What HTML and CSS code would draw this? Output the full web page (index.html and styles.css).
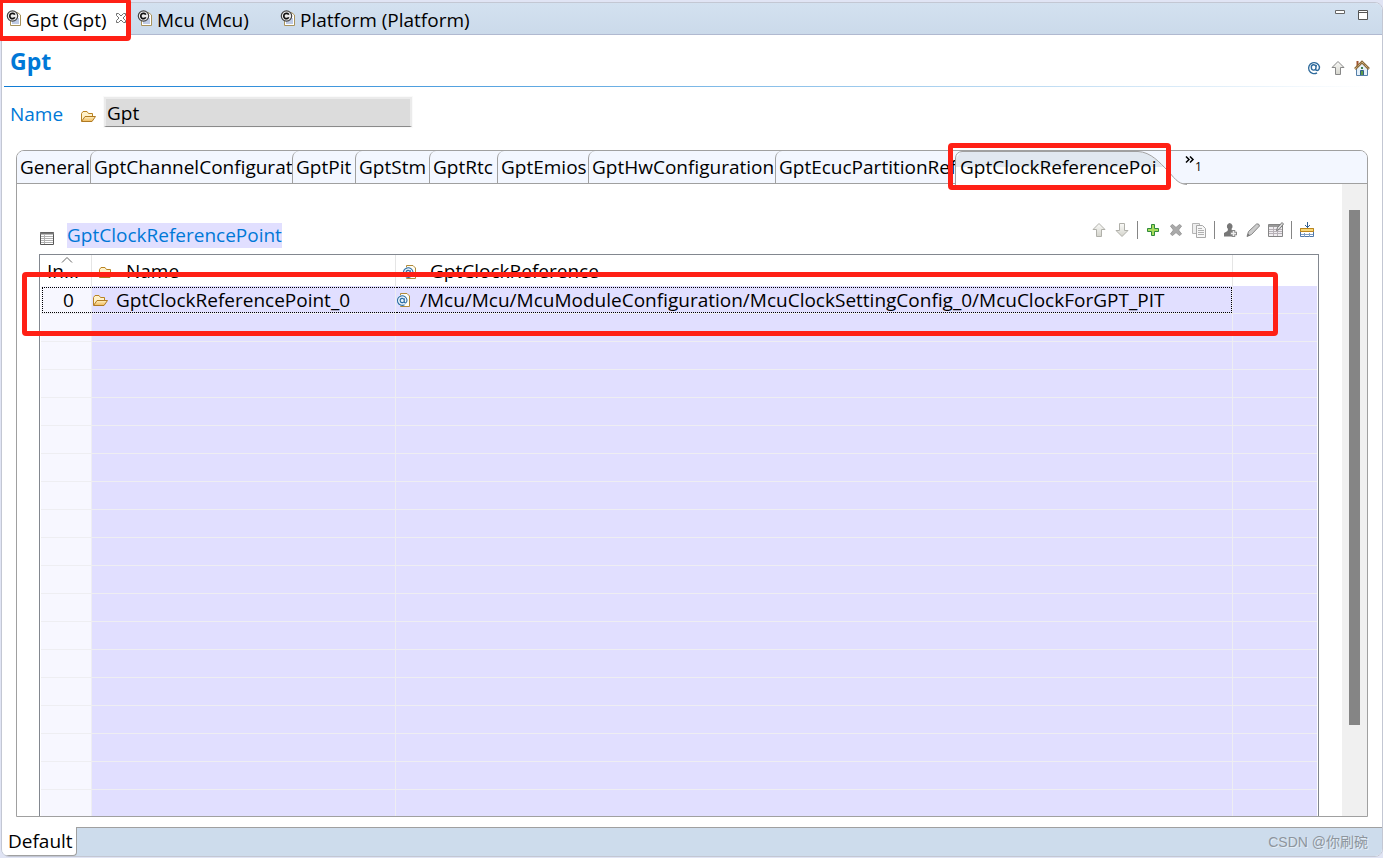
FILE: index.html
```html
<!DOCTYPE html>
<html lang="en">
<head>
<meta charset="utf-8">
<title>Gpt</title>
<link rel="stylesheet" href="styles.css">
</head>
<body>
<svg class="defs" width="0" height="0" aria-hidden="true">
  <defs>
    <linearGradient id="gold" x1="0" y1="0" x2="0" y2="1"><stop offset="0" stop-color="#fff0c0"/><stop offset="1" stop-color="#efb95c"/></linearGradient>
    <linearGradient id="grey" x1="0" y1="0" x2="0" y2="1"><stop offset="0" stop-color="#fafaf8"/><stop offset="1" stop-color="#d4d4cc"/></linearGradient>
    <symbol id="folder" viewBox="0 0 16 16">
      <path d="M1.500 13V5.500L3 3.500h4L8.500 5.500h4V8" fill="#fff1c9" stroke="#b98322"/>
      <path d="M1.500 13.500L5 8.500h10.500L12 13.500Z" fill="url(#gold)" stroke="#b07a22"/>
    </symbol>
    <symbol id="config" viewBox="0 0 16 16">
      <path d="M4.500 2.500H11.500L14.500 5v10.500h-10Z" fill="#fff" stroke="#a8935c"/>
      <path d="M6 11h7M6 13h7M11 9h2" stroke="#7f97cc"/>
      <circle cx="6.500" cy="6" r="5.200" fill="#ededed" stroke="#444" stroke-width="1.200"/>
      <path d="M8.800 4.600A2.700 2.700 0 1 0 8.800 7.400" fill="none" stroke="#111" stroke-width="1.700"/>
    </symbol>
    <symbol id="atdoc" viewBox="0 0 16 16">
      <path d="M4.500 1.500H11L13.500 4v10.500h-9Z" fill="#fffdf2" stroke="#b08a3a"/>
      <circle cx="6" cy="8.500" r="5.500" fill="#e9f3fb"/>
      <path d="M8.300 6.200v3.600q0 1.200 1.200 1.200q1.500-.5 1.500-3A4.800 4.800 0 1 0 8.500 12.800M8.200 8.300a2 2.200 0 1 0-4 .6a2 2 0 0 0 4-.6" fill="none" stroke="#2b6ca3" stroke-width="1.100"/>
    </symbol>
    <symbol id="at" viewBox="0 0 16 16">
      <path d="M10.300 4.800L9.800 9q0 1.600 1.400 1.600q2.300-.6 2.300-3.600A5.500 5.500 0 1 0 11 12.800M10 6.800a2.300 2.600 0 1 0-4.600 1.200a2 2 0 0 0 4.500-.3" fill="none" stroke="#2f6b9c" stroke-width="1.400"/>
    </symbol>
    <symbol id="up" viewBox="0 0 16 16"><path d="M8 1.500L14 7.500H10.500V14.500H5.500V7.500H2Z" fill="url(#grey)" stroke="currentColor"/></symbol>
    <symbol id="down" viewBox="0 0 16 16"><path d="M8 14.500L14 8.500H10.500V1.500H5.500V8.500H2Z" fill="url(#grey)" stroke="currentColor"/></symbol>
    <symbol id="grid" viewBox="0 0 16 16">
      <path d="M1.500 2.500h13v12h-13Z" fill="#fff" stroke="#555"/>
      <path d="M1 3.500h14" stroke="#777" stroke-width="2"/>
      <path d="M2 6.500h12M2 8.500h12M2 10.500h12M2 12.500h12M5.500 5v9" stroke="#b0b0b0"/>
    </symbol>
  </defs>
</svg>

<div class="editor">
  <nav class="editor-tabs">
    <button class="editor-tab active"><svg class="icon"><use href="#config"/></svg>Gpt (Gpt)
      <svg class="close" viewBox="0 0 12 12"><path d="M1.500 1.500h2L6 4l2.500-2.500h2v2L8 6l2.500 2.500v2h-2L6 8l-2.500 2.500h-2v-2L4 6L1.500 3.500Z" fill="#fff" stroke="#707070"/></svg></button>
    <button class="editor-tab mcu"><svg class="icon"><use href="#config"/></svg>Mcu (Mcu)</button>
    <button class="editor-tab"><svg class="icon"><use href="#config"/></svg>Platform (Platform)</button>
    <div class="window-actions">
      <button aria-label="Minimize"><svg class="win" viewBox="0 0 12 12"><path d="M1.500 1.500h9v3h-9Z" fill="#fff" stroke="#666"/></svg></button>
      <button aria-label="Maximize"><svg class="win" viewBox="0 0 12 12"><path d="M1.500 1.500h9v9h-9ZM1 3.500h10" fill="#fff" stroke="#555"/></svg></button>
    </div>
  </nav>

  <header class="form-head">
    <h1>Gpt</h1>
    <div class="head-actions">
      <button aria-label="Reference"><svg class="icon"><use href="#at"/></svg></button>
      <button aria-label="Up" class="tone-mid"><svg class="icon"><use href="#up"/></svg></button>
      <button aria-label="Home"><svg class="icon" viewBox="0 0 16 16">
        <path d="M3.500 1v5" stroke="#a0522d" stroke-width="2"/>
        <path d="M2.500 8v7.500h11V8L8 3Z" fill="#e4f0fa" stroke="#557fa8"/>
        <path d="M1 9L8 2l7 7" fill="none" stroke="#8a6a3c" stroke-width="2.600"/>
        <path d="M1 9L8 2l7 7" fill="none" stroke="#f0d09a" stroke-dasharray="1 1"/>
        <path d="M6.500 15v-4.500h3V15" fill="#5c9a4a" stroke="#2f5f88"/><path d="M7 7h2v2H7Z" fill="#3f8050"/>
      </svg></button>
    </div>
  </header>

  <div class="name-row">
    <label for="name">Name</label>
    <svg class="icon"><use href="#folder"/></svg>
    <input id="name" type="text" value="Gpt" readonly>
  </div>

  <main class="folder">
    <nav class="page-tabs">
      <button>General</button>
      <button>GptChannelConfigurat</button>
      <button>GptPit</button>
      <button>GptStm</button>
      <button>GptRtc</button>
      <button>GptEmios</button>
      <button>GptHwConfiguration</button>
      <button>GptEcucPartitionRef</button>
      <button class="selected">
        <svg class="tab-shape" viewBox="0 0 232 34">
          <path d="M0 34V7L6 1H183C196 1 205 12 212 19S222 33 232 33V34Z" fill="#fff"/>
          <path d="M1 16V7L6 1H183C194 1 202 9 208 16Z" fill="#e1e8f0"/>
          <path d="M.5 34V7Q1 1 7 .5H183C196 1 205 12 212 19S222 33 232 33.500" fill="none" stroke="#a0a0a0"/>
        </svg><span>GptClockReferencePoi</span></button>
      <button class="more" aria-label="1 more tab"><svg viewBox="0 0 10 8"><path d="M1 .5L4 3.500L1 6.500M5 .5L8 3.500L5 6.500" fill="none" stroke="#000" stroke-width="1.500"/></svg>1</button>
    </nav>

    <div class="page">
      <section class="list">
        <div class="list-head">
          <svg class="icon"><use href="#grid"/></svg>
          <h2>GptClockReferencePoint</h2>
          <div class="toolbar">
            <button aria-label="Move up" class="tone-light"><svg class="icon"><use href="#up"/></svg></button>
            <button aria-label="Move down" class="tone-light"><svg class="icon"><use href="#down"/></svg></button>
            <i></i>
            <button aria-label="Add"><svg class="icon" viewBox="0 0 16 16"><path d="M6.500 2.500h3v4h4v3h-4v4h-3v-4h-4v-3h4Z" fill="#a8dc5c" stroke="#2f8a3c"/></svg></button>
            <button aria-label="Delete"><svg class="icon" viewBox="0 0 16 16"><path d="M2.500 4L4.500 2.500L8 5.500l3.500-3L13.500 4L10.500 8l3 4l-2 1.500L8 10.500l-3.500 3L2.500 12l3-4Z" fill="#aaa" stroke="#999"/></svg></button>
            <button aria-label="Duplicate"><svg class="icon" viewBox="0 0 16 16"><path d="M1.500 1.500h7v10h-7Z" fill="#eee" stroke="#b5b5b5"/><path d="M5.500 3.500h6l3 3v9h-9Z" fill="#f7f7f7" stroke="#a8a8a8"/><path d="M7 6.500h4M7 8.500h6M7 10.500h6M7 12.500h6" stroke="#b0b0b0"/></svg></button>
            <i></i>
            <button aria-label="Add user"><svg class="icon" viewBox="0 0 16 16"><path d="M7.500 1a3.500 3.500 0 0 1 2 6l1 3H12v4.500H2V11l3.500-2L6 7a3.500 3.500 0 0 1 1.500-6Z" fill="#777"/><path d="M11.500 8v7M8 11.500h7" stroke="#888" stroke-width="3.500"/><path d="M11.500 9v5M9 11.500h5" stroke="#eee" stroke-width="1.500"/></svg></button>
            <button aria-label="Edit"><svg class="icon" viewBox="0 0 16 16"><path d="M2 14.500L3.500 9.500L11.500 2Q14 1 14.500 4L6.500 12.500Z" fill="#ccc" stroke="#858585"/><path d="M2 14.500l1-3l2 2Z" fill="#777"/></svg></button>
            <button aria-label="Edit table"><svg class="icon" viewBox="0 0 16 16"><path d="M.5 2.500h14v12H.5Z" fill="#efedf0" stroke="#858585"/><path d="M1 4h13" stroke="#999" stroke-width="2"/><path d="M1 7.500h13M1 9.500h13M1 11.500h13M5.500 5v9M9.500 5v9" stroke="#b7b1b7"/><path d="M8.500 8.500l1-3L14 .500l1.500 1.500L11 7.500Z" fill="#ddd" stroke="#777"/></svg></button>
            <i></i>
            <button aria-label="Insert column"><svg class="icon" viewBox="0 0 16 16"><path d="M1.500 6.500h13v8h-13Z" fill="#fff" stroke="#4e76a8"/><path d="M2 12.500h12M5.500 11v4M10.500 11v4" stroke="#7f9fc6"/><path d="M1.500 6.500h13v3h-13Z" fill="#f7d77a" stroke="#bd861b"/><path d="M8.500 0v6M6 3l2.500 2.500L11 3" stroke="#315f91" fill="none"/></svg></button>
          </div>
        </div>
        <div class="table-wrap">
          <table>
            <colgroup><col class="c-index"><col class="c-name"><col class="c-ref"><col></colgroup>
            <thead><tr>
              <th scope="col"><svg class="sort" viewBox="0 0 12 6"><path d="M1 5.500L6 .5L11 5.500" fill="none" stroke="#666"/></svg><div class="head-cell">In...</div></th>
              <th scope="col"><div class="head-cell"><svg class="icon"><use href="#folder"/></svg>Name</div></th>
              <th scope="col"><div class="head-cell"><svg class="icon"><use href="#atdoc"/></svg>GptClockReference</div></th>
              <th></th>
            </tr></thead>
            <tbody>
              <tr class="current">
                <td><div class="cell first">0</div></td>
                <td><div class="cell"><svg class="icon"><use href="#folder"/></svg>GptClockReferencePoint_0</div></td>
                <td><div class="cell last"><svg class="icon"><use href="#atdoc"/></svg>/Mcu/Mcu/McuModuleConfiguration/McuClockSettingConfig_0/McuClockForGPT_PIT</div></td>
                <td></td>
              </tr>
              <tr><td></td><td></td><td></td><td></td></tr>
              <tr><td></td><td></td><td></td><td></td></tr>
              <tr><td></td><td></td><td></td><td></td></tr>
              <tr><td></td><td></td><td></td><td></td></tr>
              <tr><td></td><td></td><td></td><td></td></tr>
              <tr><td></td><td></td><td></td><td></td></tr>
              <tr><td></td><td></td><td></td><td></td></tr>
              <tr><td></td><td></td><td></td><td></td></tr>
              <tr><td></td><td></td><td></td><td></td></tr>
              <tr><td></td><td></td><td></td><td></td></tr>
              <tr><td></td><td></td><td></td><td></td></tr>
              <tr><td></td><td></td><td></td><td></td></tr>
              <tr><td></td><td></td><td></td><td></td></tr>
              <tr><td></td><td></td><td></td><td></td></tr>
              <tr><td></td><td></td><td></td><td></td></tr>
              <tr><td></td><td></td><td></td><td></td></tr>
              <tr><td></td><td></td><td></td><td></td></tr>
              <tr><td></td><td></td><td></td><td></td></tr>
            </tbody>
          </table>
        </div>
      </section>
      <div class="scrollbar"><div class="thumb"></div></div>
    </div>
  </main>

  <footer class="bottom-tabs">
    <button>Default</button>
    <span class="watermark">CSDN @你刷碗</span>
  </footer>
</div>

<div class="mark mark-editor"></div>
<div class="mark mark-tab"></div>
<div class="mark mark-row"></div>
</body>
</html>
```

FILE: styles.css
```css
* { box-sizing: border-box; }
body {
  margin: 0;
  height: 100vh;
  overflow: hidden;
  padding: 2px 0 1px 1px;
  background: #e0e4f4;
  color: #000;
  font: 19px/26px "Open Sans", "Noto Sans", sans-serif;
}
button {
  padding: 0;
  border: 0;
  background: none;
  color: inherit;
  font: inherit;
  white-space: nowrap;
}
h1, h2 { margin: 0; }
.defs { position: absolute; }
.icon { display: block; flex: none; width: 16px; height: 16px; }

.editor {
  display: flex;
  flex-direction: column;
  height: 100%;
  border: 1px solid #c3c7d3;
  border-radius: 0 8px 8px 8px;
  background: #fff;
  overflow: hidden;
}
.editor-tabs {
  display: flex;
  flex: none;
  height: 32px;
  border-bottom: 1px solid #b0b9d0;
  background: linear-gradient(#d3e1f0, #cbdaea);
}
.editor-tab {
  display: flex;
  align-items: center;
  gap: 4px;
  padding: 2px 14px 0 4px;
}
.editor-tab .icon { margin-bottom: 4px; }
.editor-tab.active {
  width: 128px;
  height: 32px;
  padding-right: 0;
  background: #fff;
}
.editor-tab.mcu { width: 146px; padding-left: 7px; }
.close { width: 12px; height: 12px; margin: 0 0 4px 4px; flex: none; }
.window-actions {
  display: flex;
  align-items: flex-start;
  gap: 11px;
  margin-left: auto;
  padding: 6px 13px 0 0;
}
.win { display: block; width: 12px; height: 12px; }

.form-head {
  display: flex;
  flex: none;
  align-items: center;
  justify-content: space-between;
  height: 52px;
  margin: 0 12px 0 2px;
  padding-left: 6px;
  border-bottom: 1px solid;
  border-image: linear-gradient(90deg, #0f7bd4, #6db0e4 45%, #fff) 1;
}
h1 { color: #0078d7; font-size: 23px; line-height: 32px; }
.head-actions { display: flex; gap: 8px; margin-top: 14px; }
.tone-mid { color: #888; }
.tone-light { color: #b0b0aa; }

.name-row {
  display: flex;
  flex: none;
  align-items: center;
  margin: 10px 8px 0;
}
.name-row label { width: 70px; margin-top: 4px; color: #0078d7; }
.name-row .icon { margin: 8px 8px 0 0; }
.name-row input {
  width: 308px;
  height: 30px;
  padding: 0 1px;
  border: 2px solid #ebebeb;
  border-bottom: 1px solid #8a8a8a;
  outline: 1px solid #fafafa;
  background: #dcdcdc;
  color: #000;
  font: inherit;
}

.folder {
  display: flex;
  flex: 1;
  flex-direction: column;
  min-height: 0;
  margin: 23px 14px 10px;
  border: 1px solid #a0a0a0;
  border-radius: 8px 8px 0 0;
  overflow: hidden;
}
.page-tabs {
  display: grid;
  flex: none;
  grid-template-columns: 73px 202px 63px 74px 68px 91px 187px 180px 230px 1fr;
  height: 33px;
  border-bottom: 1px solid #a0a0a0;
  background: #f3f7ff;
}
.page-tabs button {
  padding-left: 3px;
  border-left: 1px solid #a0a0a0;
  border-radius: 7px 0 0 0;
  text-align: left;
}
.page-tabs button:first-child { border-left: 0; }
.page-tabs .selected {
  position: relative;
  padding-left: 5px;
  border: 0;
}
.tab-shape {
  position: absolute;
  left: 0;
  top: 0;
  width: 232px;
  height: 34px;
}
.selected span { position: relative; }
.page-tabs .more {
  display: flex;
  align-items: flex-start;
  border: 0;
  padding-top: 5px;
  padding-left: 0;
  font-size: 12px;
  line-height: 22px;
}
.more svg { width: 10px; height: 8px; }

.page { display: flex; flex: 1; min-height: 0; }
.list {
  display: flex;
  flex: 1;
  flex-direction: column;
  min-width: 0;
  padding: 32px 23px 0 22px;
}
.list-head {
  display: flex;
  flex: none;
  align-items: center;
  height: 38px;
}
.list-head h2 {
  margin: 0 auto 0 12px;
  background: #e1dfff;
  color: #0078d7;
  font-size: 19px;
  font-weight: 400;
  line-height: 25px;
}
.list-head > .icon { margin-top: 6px; }
.toolbar { display: flex; align-items: center; gap: 7px; margin: 0 4px 10px 0; }
.toolbar i { width: 1px; height: 18px; background: #858585; }

.table-wrap {
  flex: 1;
  min-height: 0;
  border: 1px solid #82878f;
  border-bottom: 0;
  padding: 0 1px;
  overflow: hidden;
}
table {
  width: 100%;
  table-layout: fixed;
  border-collapse: separate;
  border-spacing: 0;
}
.c-index { width: 51px; }
.c-name { width: 304px; }
.c-ref { width: 837px; }
th {
  position: relative;
  height: 31px;
  padding: 2px 0 0 6px;
  border-right: 1px solid #e5e5e5;
  font-weight: 400;
  text-align: left;
}
th:last-child, td:last-child { border-right: 0; }
.head-cell { display: flex; align-items: center; gap: 12px; height: 29px; line-height: 29px; }
.sort { position: absolute; left: 20px; top: 2px; width: 12px; height: 6px; }
td {
  height: 28px;
  padding: 0;
  border-right: 1px solid #eeeef2;
  border-bottom: 1px solid #eeeef2;
  background: #e1dfff;
}
td:first-child { background: #f7f7ff; }
.cell {
  display: flex;
  align-items: center;
  gap: 8px;
  height: 26px;
  border-top: 1px dotted #000;
  border-bottom: 1px dotted #000;
  white-space: nowrap;
}
.cell.first { margin-left: 1px; padding-left: 20px; border-left: 1px dotted #000; }
.cell.last { border-right: 1px dotted #000; }

.scrollbar { width: 25px; padding: 26px 7px 0; background: #f0f0f0; }
.thumb { height: 85%; background: #858585; }

.bottom-tabs {
  display: flex;
  flex: none;
  align-items: center;
  justify-content: space-between;
  height: 29px;
  border-top: 1px solid #a0a0a0;
  background: #cddcec;
}
.bottom-tabs button {
  height: 29px;
  margin-top: -1px;
  padding: 0 3px 0 6px;
  border-right: 1px solid #a0a0a0;
  border-bottom: 1px solid #a0a0a0;
  border-radius: 0 0 4px 4px;
  background: #fff;
}
.watermark {
  margin-right: 14px;
  color: #8d959d;
  font: 14px/22px "Liberation Sans", "Noto Sans CJK SC", sans-serif;
  text-shadow: 1px 1px 0 #e4edf5;
}

/* Red call-outs drawn over the window */
.mark { position: absolute; border: 5px solid #ff2015; border-radius: 4px; pointer-events: none; }
.mark-editor { left: -2px; top: -2px; width: 133px; height: 43px; }
.mark-tab { left: 948px; top: 143px; width: 223px; height: 47px; }
.mark-row { left: 22px; top: 272px; width: 1256px; height: 64px; }
```
